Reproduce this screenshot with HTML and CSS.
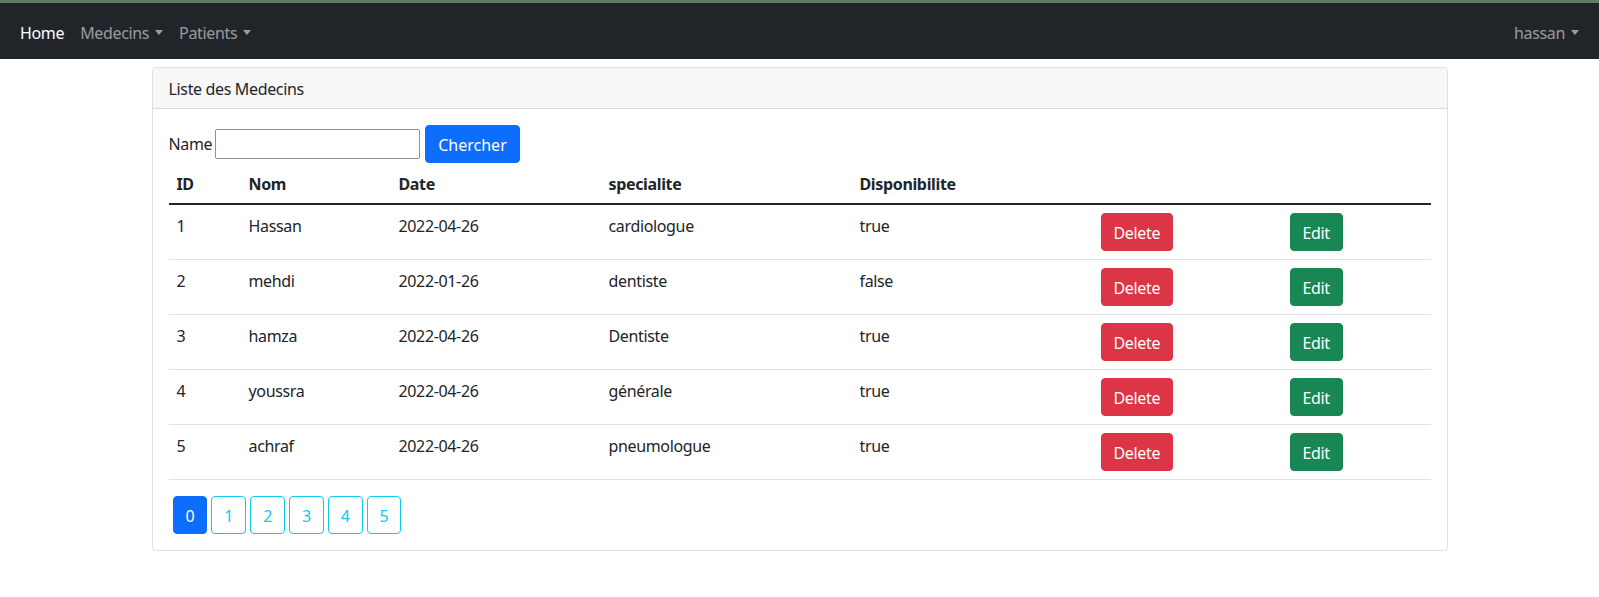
FILE: index.html
```html
<!DOCTYPE html>
<html lang="fr">
<head>
<meta charset="utf-8">
<title>Medecins</title>
<link rel="stylesheet" href="styles.css">
</head>
<body>
<div class="topline"></div>
<nav class="navbar">
  <ul class="nav-left">
    <li><a class="nav-link active">Home</a></li>
    <li><a class="nav-link dropdown">Medecins</a></li>
    <li><a class="nav-link dropdown">Patients</a></li>
  </ul>
  <ul class="nav-right">
    <li><a class="nav-link dropdown">hassan</a></li>
  </ul>
</nav>
<div class="container">
  <div class="card">
    <div class="card-header">Liste des Medecins</div>
    <div class="card-body">
      <form class="search">
        <label class="search-label">Name</label>
        <input class="search-input" type="text">
        <button type="button" class="btn btn-primary">Chercher</button>
      </form>
      <table class="table">
        <thead>
          <tr>
            <th class="c-id">ID</th>
            <th class="c-nom">Nom</th>
            <th class="c-date">Date</th>
            <th class="c-spec">specialite</th>
            <th class="c-disp">Disponibilite</th>
            <th class="c-del"></th>
            <th class="c-edit"></th>
          </tr>
        </thead>
        <tbody>
          <tr><td>1</td><td>Hassan</td><td>2022-04-26</td><td>cardiologue</td><td>true</td><td><a class="btn btn-danger">Delete</a></td><td><a class="btn btn-success">Edit</a></td></tr>
          <tr><td>2</td><td>mehdi</td><td>2022-01-26</td><td>dentiste</td><td>false</td><td><a class="btn btn-danger">Delete</a></td><td><a class="btn btn-success">Edit</a></td></tr>
          <tr><td>3</td><td>hamza</td><td>2022-04-26</td><td>Dentiste</td><td>true</td><td><a class="btn btn-danger">Delete</a></td><td><a class="btn btn-success">Edit</a></td></tr>
          <tr><td>4</td><td>youssra</td><td>2022-04-26</td><td>générale</td><td>true</td><td><a class="btn btn-danger">Delete</a></td><td><a class="btn btn-success">Edit</a></td></tr>
          <tr><td>5</td><td>achraf</td><td>2022-04-26</td><td>pneumologue</td><td>true</td><td><a class="btn btn-danger">Delete</a></td><td><a class="btn btn-success">Edit</a></td></tr>
        </tbody>
      </table>
      <ul class="pages">
        <li><a class="btn page page-active">0</a></li>
        <li><a class="btn page">1</a></li>
        <li><a class="btn page">2</a></li>
        <li><a class="btn page">3</a></li>
        <li><a class="btn page">4</a></li>
        <li><a class="btn page">5</a></li>
      </ul>
    </div>
  </div>
</div>
</body>
</html>
```
FILE: styles.css
```css
* { box-sizing: border-box; }
html, body { margin: 0; padding: 0; }
body {
  font-family: "Noto Sans", "Open Sans", sans-serif;
  font-size: 16px;
  line-height: 24px;
  letter-spacing: -0.35px;
  color: #212529;
  background: #fff;
}
.topline { height: 3px; background: #5f7d5f; }
.navbar {
  background: #212529;
  height: 56px;
  padding: 8px 12px;
  display: flex;
  align-items: center;
  justify-content: space-between;
}
.nav-left, .nav-right {
  list-style: none;
  margin: 0;
  padding: 0;
  display: flex;
}
.nav-link {
  display: block;
  padding: 10px 8px 6px;
  color: rgba(255,255,255,.55);
  text-decoration: none;
}
.nav-link.active { color: #fff; }
.dropdown::after {
  content: "";
  display: inline-block;
  margin-left: 6px;
  vertical-align: 4px;
  border-top: 5px solid;
  border-right: 4.5px solid transparent;
  border-left: 4.5px solid transparent;
}
.container {
  max-width: 1320px;
  margin: 8px auto 0;
  padding: 0 12px;
}
.card {
  border: 1px solid rgba(0,0,0,.125);
  border-radius: 4px;
}
.card-header {
  padding: 9px 16px 7px;
  background: #f7f7f7;
  border-bottom: 1px solid rgba(0,0,0,.125);
  border-radius: 3px 3px 0 0;
}
.card-body { padding: 16px; }
.search {
  display: flex;
  align-items: center;
  margin: 0;
}
.search-label { margin-right: 3px; }
.search-input {
  width: 205px;
  height: 30px;
  border: 1px solid #8f8f9d;
  border-radius: 2px;
  margin-right: 5px;
  font: inherit;
}
.btn {
  display: inline-block;
  padding: 7px 12px 5px;
  font: inherit;
  line-height: 24px;
  border: 1px solid transparent;
  border-radius: 4px;
  text-decoration: none;
  color: #fff;
  cursor: pointer;
}
.btn-primary { background: #0d6efd; border-color: #0d6efd; }
.btn-danger { background: #dc3545; border-color: #dc3545; }
.btn-success { background: #198754; border-color: #198754; }
.table {
  width: 100%;
  border-collapse: collapse;
  margin-bottom: 16px;
}
.table th, .table td {
  padding: 9px 8px 7px;
  text-align: left;
  vertical-align: top;
  border-bottom: 1px solid #dee2e6;
}
.table td:nth-child(n+6) { padding: 8px; }
.table th { font-weight: 700; }
.table tbody { border-top: 2px solid #212529; }
.c-id { width: 72px; }
.c-nom { width: 150px; }
.c-date { width: 210px; }
.c-spec { width: 251px; }
.c-disp { width: 241px; }
.c-del { width: 189px; }
.pages {
  list-style: none;
  margin: 0;
  padding: 0;
  display: flex;
}
.pages li { margin-left: 4px; }
.page {
  color: #0dcaf0;
  border-color: #0dcaf0;
  background: #fff;
}
.page-active {
  background: #0d6efd;
  border-color: #0d6efd;
  color: #fff;
}
```
